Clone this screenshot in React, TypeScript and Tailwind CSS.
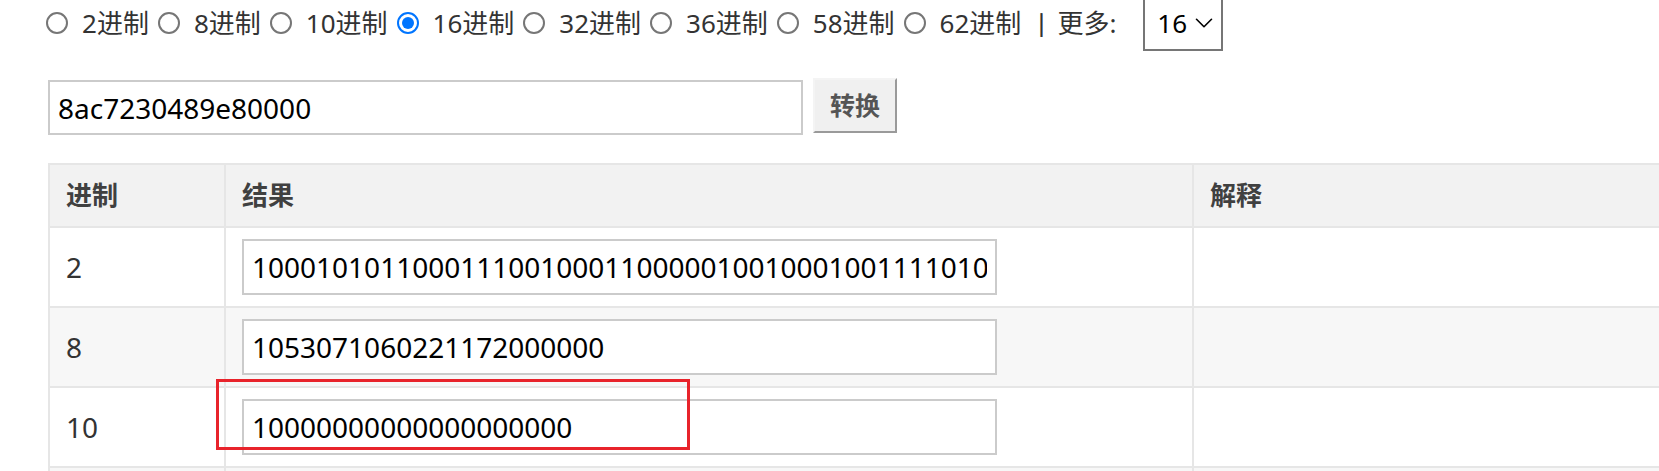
import { useState } from 'react';
import { ChevronDown } from 'lucide-react';

const bases = ['2', '8', '10', '16', '32', '36', '58', '62'];

const results = [
  { base: '2', value: '1000101011000111001000110000010010001001111010000000000000000000' },
  { base: '8', value: '1053071060221172000000' },
  { base: '10', value: '10000000000000000000' },
  { base: '16', value: '8ac7230489e80000' },
  { base: '32', value: '8lje4i4jq00000' },
];

function Radio({ checked }: { checked: boolean }) {
  return (
    <svg width="22" height="22" viewBox="0 0 22 22" className="shrink-0">
      <circle cx="11" cy="11" r="10" fill="white" stroke={checked ? '#0075ff' : '#767676'} strokeWidth="2" />
      {checked && <circle cx="11" cy="11" r="6" fill="#0075ff" />}
    </svg>
  );
}

export default function App() {
  const [base, setBase] = useState('16');
  const [input, setInput] = useState('8ac7230489e80000');

  return (
    <div className="relative h-[471px] w-full overflow-hidden bg-white font-['Noto_Sans','Noto_Sans_CJK_SC',sans-serif] text-[#333]">
      <div className="-mt-[5px] pl-[46px]">
        {/* base picker */}
        <div className="flex h-[56px] items-center text-[26px]">
          {bases.map(b => (
            <label key={b} className="mr-[9px] flex shrink-0 cursor-pointer items-center gap-[14px]" onClick={() => setBase(b)}>
              <Radio checked={base === b} />
              <span className="shrink-0">{b}进制</span>
            </label>
          ))}
          <span className="-ml-[2px] shrink-0 font-['Noto_Sans_CJK_SC',sans-serif]">丨</span>
          <span className="ml-[3px] shrink-0">更多:</span>
          <div className="ml-[27px] flex h-[56px] w-[80px] shrink-0 items-center justify-between border-2 border-[#767676] pl-[12px] pr-[2px] text-[26px] text-black">
            <span>16</span>
            <ChevronDown size={30} strokeWidth={1.3} />
          </div>
        </div>

        {/* input row */}
        <div className="mt-[27px] flex items-start gap-[10px] pl-[2px]">
          <input
            value={input}
            onChange={e => setInput(e.target.value)}
            className="mt-[2px] h-[55px] w-[755px] border-2 border-[#cbcbcb] px-[8px] text-[28px] text-black outline-none"
          />
          <button className="h-[55px] w-[84px] border-2 border-t-[#f4f4f4] border-l-[#f4f4f4] border-r-[#9a9a9a] border-b-[#9a9a9a] bg-[#f0f0f0] text-[25px] font-bold text-[#555]">
            转换
          </button>
        </div>

        {/* results table */}
        <div className="ml-[2px] mt-[28px] grid w-[1640px] grid-cols-[176px_968px_1fr] border-l-2 border-t-2 border-[#e6e6e6]">
          <div className="flex h-[63px] items-center border-r-2 border-b-2 border-[#e6e6e6] bg-[#f2f2f2] pl-[16px] text-[26px] font-bold text-[#404040]">进制</div>
          <div className="flex h-[63px] items-center border-r-2 border-b-2 border-[#e6e6e6] bg-[#f2f2f2] pl-[16px] text-[26px] font-bold text-[#404040]">结果</div>
          <div className="flex h-[63px] items-center border-r-2 border-b-2 border-[#e6e6e6] bg-[#f2f2f2] pl-[16px] text-[26px] font-bold text-[#404040]">解释</div>
          {results.map((r, i) => {
            const bg = i % 2 === 1 ? 'bg-[#f7f7f7]' : 'bg-white';
            return [
              <div key={r.base + 'a'} className={`flex h-[80px] items-center border-r-2 border-b-2 border-[#e6e6e6] pl-[16px] text-[28px] text-[#333] ${bg}`}>{r.base}</div>,
              <div key={r.base + 'b'} className={`flex h-[80px] items-center border-r-2 border-b-2 border-[#e6e6e6] pl-[16px] ${bg}`}>
                <input readOnly value={r.value} className="h-[56px] w-[755px] border-2 border-[#cbcbcb] bg-white px-[8px] text-[28px] text-black outline-none" />
              </div>,
              <div key={r.base + 'c'} className={`h-[80px] border-r-2 border-b-2 border-[#e6e6e6] ${bg}`} />,
            ];
          })}
        </div>
      </div>

      {/* highlight box */}
      <div className="pointer-events-none absolute left-[216px] top-[379px] h-[71px] w-[474px] border-[3px] border-[#e8232b]" />
    </div>
  );
}
